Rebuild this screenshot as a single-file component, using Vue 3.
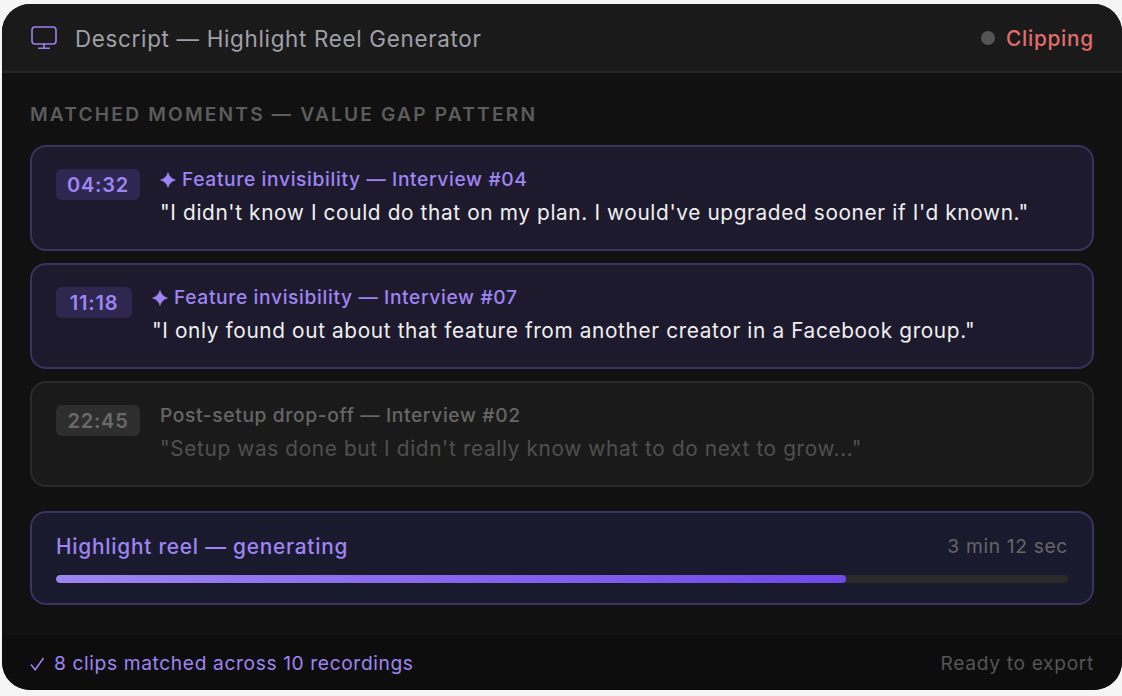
<script setup>
const moments = [
  { t: '04:32', w: 84, title: 'Feature invisibility — Interview #04', quote: '"I didn\'t know I could do that on my plan. I would\'ve upgraded sooner if I\'d known."', on: true },
  { t: '11:18', w: 76, title: 'Feature invisibility — Interview #07', quote: '"I only found out about that feature from another creator in a Facebook group."', on: true },
  { t: '22:45', w: 84, title: 'Post-setup drop-off — Interview #02', quote: '"Setup was done but I didn\'t really know what to do next to grow..."', on: false },
]
</script>

<template>
  <div class="page">
    <div class="card">
      <header class="head">
        <svg class="mon" width="26" height="24" viewBox="0 0 26 24" fill="none" stroke="#9b7ff0" stroke-width="1.6" stroke-linecap="round" stroke-linejoin="round">
          <rect x="1" y="1" width="24" height="17" rx="3"/>
          <path d="M13 18v4M7.7 22.2h10.6"/>
        </svg>
        <span class="title">Descript — Highlight Reel Generator</span>
        <span class="dot"></span>
        <span class="status">Clipping</span>
      </header>
      <main class="body">
        <div class="label">MATCHED MOMENTS — VALUE GAP PATTERN</div>
        <div class="list">
          <div v-for="m in moments" :key="m.t" class="row" :class="{ on: m.on }">
            <span class="time" :style="{ width: m.w + 'px' }">{{ m.t }}</span>
            <div class="txt">
              <div class="name">
                <svg v-if="m.on" class="star" width="16" height="16" viewBox="0 0 16 16"><path d="M8 .5Q9.6 6.4 15.5 8 9.6 9.6 8 15.5 6.4 9.6 .5 8 6.4 6.4 8 .5Z" fill="#9f85f3" stroke="#9f85f3" stroke-width=".6" stroke-linejoin="round"/></svg>{{ m.title }}
              </div>
              <div class="quote">{{ m.quote }}</div>
            </div>
          </div>
        </div>
        <div class="reel">
          <div class="reel-top">
            <span class="reel-name">Highlight reel — generating</span>
            <span class="reel-time">3 min 12 sec</span>
          </div>
          <div class="track"><div class="fill" :style="{ width: '78.1%' }"></div></div>
        </div>
      </main>
      <footer class="foot">
        <span class="ok">
          <svg class="tick" width="15" height="14" viewBox="0 0 15 14" fill="none" stroke="#9f85f3" stroke-width="1.5"><path d="M1 7.5 5.2 12.8 13.5 1"/></svg>8 clips matched across 10 recordings
        </span>
        <span class="ready">Ready to export</span>
      </footer>
    </div>
  </div>
</template>

<style>
html, body { margin: 0; background: #f5f5f5; }
</style>

<style scoped>
.page { width: 1122px; height: 696px; padding: 4px 0 6px 2px; box-sizing: border-box; font-family: Inter, "Noto Sans", sans-serif; font-variation-settings: "opsz" 14; overflow: hidden; }
.card { width: 1120px; height: 686px; border-radius: 28px; background: #111111; overflow: hidden; display: flex; flex-direction: column; }
.head { height: 69px; box-sizing: border-box; border-bottom: 2px solid #262626; background: #1a1a1a; display: flex; align-items: center; padding: 0 28px 0 29px; flex: none; }
.mon { flex: none; margin-right: 18px; margin-top: 1px; }
.title { font-size: 22.4px; letter-spacing: .69px; color: #a0a0a8; flex: 1; margin-top: 2px; }
.dot { width: 14px; height: 14px; border-radius: 50%; background: #555; margin-right: 11px; }
.status { font-size: 20.8px; letter-spacing: .75px; font-weight: 500; color: #e06c6c; margin-top: 2px; }
.body { flex: 1; padding: 31px 28px 0; display: flex; flex-direction: column; }
.label { font-size: 19.2px; font-weight: 600; letter-spacing: 2.17px; color: #5c5c5c; line-height: 20px; margin-bottom: 21px; }
.list { display: flex; flex-direction: column; gap: 12px; }
.row { height: 106px; box-sizing: border-box; border-radius: 16px; border: 2px solid #2a2a2a; background: #1a1a1a; display: flex; align-items: flex-start; padding: 22px 24px 0; gap: 20px; }
.row.on { border-color: #3a3260; background: #1e1a2e; }
.time { flex: none; box-sizing: border-box; text-align: center; font-size: 20px; font-weight: 600; letter-spacing: .8px; line-height: 29px; padding-top: 2px; border-radius: 6px; background: #2e2e2e; color: #6a6a6a; }
.on .time { background: #2e2850; color: #9f85f3; }
.txt { min-width: 0; margin-top: -2px; }
.name { font-size: 19.2px; letter-spacing: .64px; font-weight: 500; line-height: 24px; color: #666; margin-bottom: 8px; white-space: nowrap; }
.on .name { color: #9f85f3; }
.star { margin-right: 6px; vertical-align: -2px; }
.quote { font-size: 20.8px; letter-spacing: .63px; line-height: 27px; color: #505050; white-space: nowrap; }
.on .quote { color: #f0f0f0; }
.reel { margin-top: 24px; height: 94px; box-sizing: border-box; border-radius: 16px; border: 2px solid #3a3260; background: #1a1a2e; padding: 18px 24px 0; }
.reel-top { display: flex; justify-content: space-between; align-items: center; height: 30px; margin-bottom: 14px; }
.reel-name { font-size: 20.8px; letter-spacing: .78px; font-weight: 500; color: #9f85f3; }
.reel-time { font-size: 19.2px; letter-spacing: .67px; color: #666; }
.track { height: 8px; border-radius: 4px; background: #2a2a2a; overflow: hidden; }
.fill { height: 100%; border-radius: 4px; background: linear-gradient(90deg, #9f85f3, #7048e8); }
.foot { height: 55px; flex: none; box-sizing: border-box; background: #0d0d0d; display: flex; justify-content: space-between; align-items: center; padding: 0 28px; }
.ok { font-size: 19.2px; letter-spacing: .62px; color: #9f85f3; }
.tick { margin-right: 9px; vertical-align: -1px; }
.ready { font-size: 19.2px; letter-spacing: .67px; color: #555; }
</style>
